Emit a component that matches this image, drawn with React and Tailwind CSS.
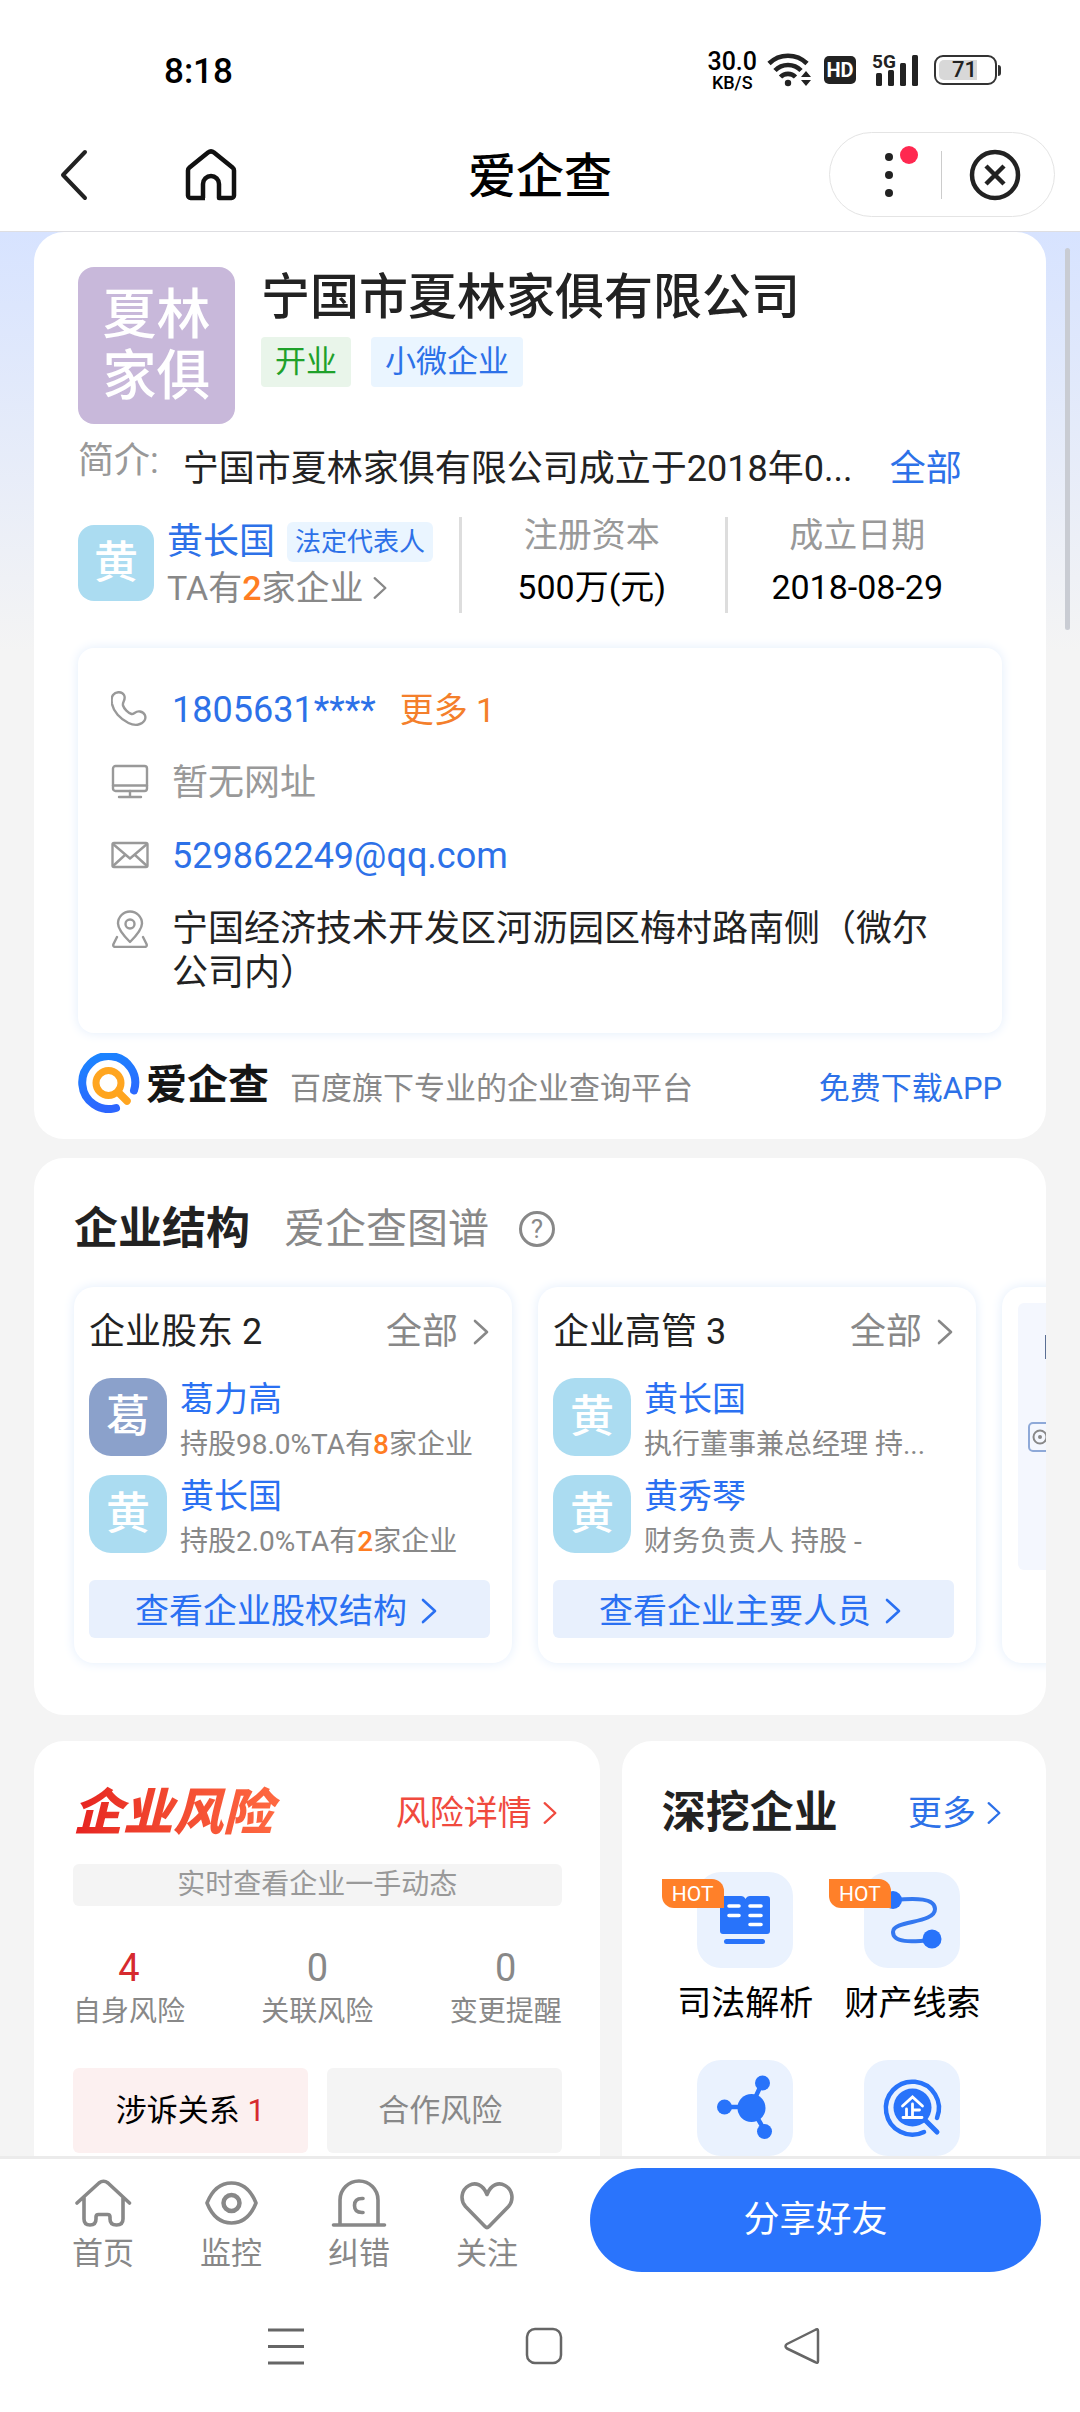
const people = {
  holders: [
    { surname: '葛', name: '葛力高', color: 'bg-[#8ba1cb]', before: '持股98.0%TA有', count: '8', after: '家企业' },
    { surname: '黄', name: '黄长国', color: 'bg-[#abdcf1]', before: '持股2.0%TA有', count: '2', after: '家企业' },
  ],
  managers: [
    { surname: '黄', name: '黄长国', color: 'bg-[#abdcf1]', before: '执行董事兼总经理 持...' },
    { surname: '黄', name: '黄秀琴', color: 'bg-[#abdcf1]', before: '财务负责人 持股 -' },
  ],
};

const Chevron = ({ className = '' }) => (
  <svg viewBox="0 0 18 26" className={className} fill="none" stroke="currentColor" strokeWidth="2.6" strokeLinecap="round" strokeLinejoin="round">
    <path d="M3 2l12 11L3 24" />
  </svg>
);

const StatusBar = () => (
  <div className="flex h-[104px] shrink-0 items-end justify-between pr-[79px] pl-[164px] text-[#222]">
    <div className="mb-[9px] text-[35px] leading-[46px] font-medium text-black">8:18</div>
    <div className="mb-[11px] flex h-[46px] items-center">
      <div className="flex flex-col items-center font-medium text-black">
        <span className="text-[25px] leading-[25px]">30.0</span>
        <span className="text-[18px] leading-[18px]">KB/S</span>
      </div>
      <svg viewBox="0 0 46 36" className="ml-[10px] h-9 w-[46px]" fill="none" stroke="currentColor" strokeWidth="4.6">
        <path d="M2 11.500a27 27 0 0 1 38 0" />
        <path d="M8 18.500a18 18 0 0 1 26 0" />
        <path d="M13.500 25a10.500 10.500 0 0 1 15 0" />
        <circle cx="21" cy="31" r="3.200" fill="currentColor" stroke="none" />
        <path d="M34 25l5-6 5 6zM34 28l5 6 5-6z" fill="currentColor" stroke="none" />
      </svg>
      <div className="ml-[11px] flex h-7 w-8 items-center justify-center rounded-[5px] bg-[#222] text-[20px] leading-none font-bold text-white">HD</div>
      <svg viewBox="0 0 48 36" className="ml-4 h-9 w-[48px] overflow-visible" fill="currentColor">
        <text x="0" y="16" fontSize="19" fontWeight="700" fontFamily="Roboto, sans-serif">5G</text>
        <rect x="4" y="21" width="6" height="13" rx="1.500" />
        <rect x="16" y="18" width="6" height="16" rx="1.500" />
        <rect x="28" y="11" width="6" height="23" rx="1.500" />
        <rect x="40" y="3" width="6" height="31" rx="1.500" />
      </svg>
      <div className="ml-[14px] flex h-[30px] w-[63px] rounded-[9px] border-2 border-[#333] p-[3px]">
        <div className="flex w-[38px] items-center justify-end rounded-l-[5px] bg-[#d8d8d8] text-[22px] leading-none font-medium">71</div>
      </div>
      <div className="ml-px h-[11px] w-[3px] rounded-r bg-[#333]" />
    </div>
  </div>
);

const Header = () => (
  <header className="grid h-[128px] shrink-0 grid-cols-[1fr_auto_1fr] items-center border-b border-[#dedee2] pt-7 pb-[14px]">
    <div className="flex items-center pl-[58px]">
      <button aria-label="返回">
        <svg viewBox="0 0 32 52" className="h-[52px] w-8" fill="none" stroke="#222" strokeWidth="4" strokeLinecap="round" strokeLinejoin="round">
          <path d="M27 3L5 26l22 23" />
        </svg>
      </button>
      <button aria-label="主页" className="ml-[95px]">
        <svg viewBox="0 0 52 52" className="h-[52px] w-[52px]" fill="none" stroke="#111" strokeWidth="4.500" strokeLinejoin="round">
          <path d="M20 49H5.500a2.500 2.500 0 0 1-2.500-2.500V21.500a4 4 0 0 1 1.500-3L23 3.500a5 5 0 0 1 6 0l18.500 15a4 4 0 0 1 1.500 3V46.500a2.500 2.500 0 0 1-2.500 2.500H34V35a8 8 0 0 0-16 0v14" />
        </svg>
      </button>
    </div>
    <h1 className="pt-1 text-[48px] leading-[60px] font-medium text-black">爱企查</h1>
    <div className="mr-[25px] flex h-[85px] w-[226px] items-center justify-self-end rounded-full border border-[#e4e4e4]">
      <button aria-label="更多选项" className="relative flex h-full w-[111px] flex-col items-center justify-center gap-[10px] pl-[6px]">
        <i className="h-2 w-2 rounded-full bg-[#222]" />
        <i className="h-2 w-2 rounded-full bg-[#222]" />
        <i className="h-2 w-2 rounded-full bg-[#222]" />
        <i className="absolute top-[13px] right-[23px] h-[18px] w-[18px] rounded-full bg-[#ff2850]" />
      </button>
      <span className="h-12 w-px bg-[#ccc]" />
      <button aria-label="关闭" className="flex flex-1 justify-center pr-[6px]">
        <svg viewBox="0 0 52 52" className="h-[52px] w-[52px]" fill="none" stroke="#222" strokeWidth="4.500">
          <circle cx="26" cy="26" r="23" />
          <path d="M17 17l18 18M35 17L17 35" />
        </svg>
      </button>
    </div>
  </header>
);

const contactIcon = 'h-[38px] w-[38px] shrink-0 mt-[3px] mr-[23px]';

const ContactBox = () => (
  <address className="mt-[39px] flex flex-col gap-[29px] rounded-2xl pt-[40px] pr-12 pb-[38px] pl-[33px] text-[36px] leading-[44px] text-[#222] not-italic shadow-[0_0_12px_#e2edfb]">
    <div className="flex">
      <svg viewBox="0 0 38 38" className={contactIcon} fill="none" stroke="#999" strokeWidth="2.400" strokeLinejoin="round">
        <path d="M2 4C5 0 11 .500 13 4c2.500 4.500-2 7-1 10.500 1.200 3.500 5 7.500 8.500 8.500 2.500 .700 4-3.500 8.500-2.500 5 1 6.500 5.500 4.500 9-3 5-10 5.500-16 2.500C9 28 2.500 20.500 1 13 .300 9 .500 6 2 4z" />
      </svg>
      <a href="#phone" className="text-[#2d71e8]">1805631****</a>
      <button className="ml-[24px] text-[34px] text-[#f47f2b]">更多 1</button>
    </div>
    <div className="flex text-[#999]">
      <svg viewBox="0 0 38 38" className={contactIcon} fill="none" stroke="#999" strokeWidth="2.400" strokeLinecap="round">
        <rect x="2" y="2" width="34" height="25" rx="2.500" />
        <path d="M2 21.500h34M19 27v6M8 33h22" />
      </svg>
      暂无网址
    </div>
    <div className="flex">
      <svg viewBox="0 0 38 38" className={contactIcon} fill="none" stroke="#999" strokeWidth="2.400" strokeLinejoin="round">
        <rect x="1.500" y="6" width="35" height="24" rx="1.500" />
        <path d="M2 7l17 14.500L36 7M2 29l12-11M36 29L24 18" />
      </svg>
      <a href="#mail" className="text-[#2d71e8]">529862249@qq.com</a>
    </div>
    <div className="flex">
      <svg viewBox="0 0 38 38" className={contactIcon} fill="none" stroke="#999" strokeWidth="2.400" strokeLinecap="round" strokeLinejoin="round">
        <path d="M19 32C12 25 7 19 7 13.500a12 12 0 0 1 24 0C31 19 26 25 19 32z" />
        <circle cx="19" cy="14" r="4.500" />
        <path d="M6 27l-3.500 7c-.700 1.700 0 3 2 3h29c2 0 2.700-1.300 2-3L32 27" />
      </svg>
      <span>宁国经济技术开发区河沥园区梅村路南侧（微尔公司内）</span>
    </div>
  </address>
);

const CompanyCard = () => (
  <section className="rounded-[30px] bg-white px-[44px] pt-[35px] pb-[26px]">
    <div className="flex">
      <div className="flex h-[157px] w-[157px] items-center justify-center rounded-2xl bg-[#c8b8da] text-center text-[54px] leading-[61px] font-medium text-white">
        夏林
        <br />
        家俱
      </div>
      <div className="ml-[26px]">
        <h2 className="pt-[2px] text-[49px] leading-[58px] font-medium text-[#222]">宁国市夏林家俱有限公司</h2>
        <div className="mt-[10px] flex gap-5 text-[31px] leading-[50px]">
          <span className="rounded bg-[#e9f5ea] px-[14px] text-[#1fa12b]">开业</span>
          <span className="rounded bg-[#eaf5ff] px-[14px] text-[#2d71e8]">小微企业</span>
        </div>
      </div>
    </div>

    <div className="mt-[15px] flex text-[36px] leading-[60px]">
      <span className="leading-[44px] text-[#999]">简介:</span>
      <p className="ml-[24px] w-[674px] text-[#222]">宁国市夏林家俱有限公司成立于2018年0...</p>
      <button className="ml-[33px] text-[#2d71e8]">全部</button>
    </div>

    <div className="mt-[18px] flex h-[92px] items-center">
      <div className="flex h-[76px] w-[76px] items-center justify-center rounded-2xl bg-[#abdcf1] text-[44px] font-medium text-white">黄</div>
      <div className="ml-[13px] w-[292px] pt-[2px]">
        <div className="flex items-center">
          <a href="#person" className="text-[36px] leading-[48px] text-[#2d71e8]">黄长国</a>
          <span className="ml-[12px] rounded-md bg-[#eaf5ff] px-2 text-[26px] leading-10 text-[#2d71e8]">法定代表人</span>
        </div>
        <button className="flex items-center text-[34px] leading-[44px] text-[#888]">
          <span>TA有<b className="font-medium text-[#ff7d22]">2</b>家企业</span>
          <Chevron className="ml-[9px] h-6 w-4" />
        </button>
      </div>
      <dl className="grid h-full flex-1 grid-cols-2 pr-3 text-center text-[34px]">
        <div className="border-l-[3px] border-[#ddd] pr-[3px]">
          <dt className="leading-[36px] text-[#999]">注册资本</dt>
          <dd className="mt-2 leading-[52px] text-black">500万(元)</dd>
        </div>
        <div className="border-l-[3px] border-[#ddd] pr-[3px]">
          <dt className="leading-[36px] text-[#999]">成立日期</dt>
          <dd className="mt-2 leading-[52px] text-black">2018-08-29</dd>
        </div>
      </dl>
    </div>

    <ContactBox />

    <div className="mt-5 flex h-[60px] items-end text-[31px] leading-[48px]">
      <svg viewBox="0 0 62 60" className="h-[60px] w-[62px]" fill="none" strokeLinecap="round">
        <defs>
          <linearGradient id="ring" x1="0" y1="0" x2="0.300" y2="1">
            <stop offset="0" stopColor="#1a86ff" />
            <stop offset="1" stopColor="#2c66ff" />
          </linearGradient>
        </defs>
        <path d="M56 37.500A26.500 26.500 0 1 0 38 55" stroke="url(#ring)" strokeWidth="8" />
        <circle cx="30.500" cy="30" r="12.500" stroke="#ffa51f" strokeWidth="7" />
        <path d="M40 39l9 9" stroke="#ffa51f" strokeWidth="7.500" />
      </svg>
      <strong className="ml-[6px] text-[41px] leading-[56px] font-bold text-[#151515]">爱企查</strong>
      <span className="ml-[21px] flex-1 text-[#888]">百度旗下专业的企业查询平台</span>
      <a href="#app" className="text-[#2d71e8]">免费下载APP</a>
    </div>
  </section>
);

const PeopleCard = ({ title, list, action }) => (
  <div className="w-[438px] shrink-0 rounded-[20px] pt-[20px] pr-[22px] pb-[25px] pl-[15px] shadow-[0_0_12px_#e2edfb]">
    <div className="flex justify-between text-[36px] leading-[50px]">
      <h3 className="text-[#222]">{title}</h3>
      <button className="flex items-center text-[#888]">
        全部
        <Chevron className="ml-[14px] h-7 w-[18px]" />
      </button>
    </div>
    <ul className="mt-[21px] flex flex-col gap-[5px]">
      {list.map((p) => (
        <li key={p.name} className="flex">
          <div className={`flex h-[78px] w-[78px] shrink-0 items-center justify-center rounded-[22px] text-[44px] font-medium text-white ${p.color}`}>{p.surname}</div>
          <div className="ml-[13px]">
            <a href="#person" className="block text-[34px] leading-[42px] text-[#2a70f2]">{p.name}</a>
            <p className="text-[28px] leading-[50px] whitespace-nowrap text-[#888]">
              {p.before}
              {p.count && <b className="font-medium text-[#ff7d22]">{p.count}</b>}
              {p.after}
            </p>
          </div>
        </li>
      ))}
    </ul>
    <button className="mt-[13px] flex h-[58px] w-full items-center justify-center rounded-md bg-[#e8f0fd] pt-[3px] pr-[6px] text-[34px] leading-[54px] text-[#2a70f2]">
      {action}
      <Chevron className="ml-[13px] h-7 w-[18px]" />
    </button>
  </div>
);

const StructureCard = () => (
  <section className="mt-[19px] overflow-hidden rounded-[30px] bg-white pt-[41px] pb-[52px] pl-10">
    <div className="flex items-center leading-[60px]">
      <h2 className="text-[44px] font-bold text-[#222]">企业结构</h2>
      <span className="ml-[34px] text-[41px] text-[#888]">爱企查图谱</span>
      <button aria-label="说明" className="ml-[30px] flex h-9 w-9 items-center justify-center rounded-full border-[3px] border-[#888] text-[26px] leading-none text-[#888]">?</button>
    </div>
    <div className="mt-[28px] flex gap-[26px]">
      <PeopleCard title="企业股东 2" list={people.holders} action="查看企业股权结构" />
      <PeopleCard title="企业高管 3" list={people.managers} action="查看企业主要人员" />
      {/* next card only peeks in from the right edge */}
      <div className="w-[438px] shrink-0 rounded-[20px] p-4 shadow-[0_0_12px_#e2edfb]">
        <div className="h-[267px] rounded-md bg-[#f4f7fe] pt-8 pl-[10px]">
          <div className="ml-[17px] h-[24px] w-[60px] bg-[#5a6f94]" />
          <svg viewBox="0 0 60 30" className="mt-[63px] h-[30px] w-[60px]" fill="none" stroke="#8ea9d8" strokeWidth="2">
            <rect x="1" y="1" width="58" height="28" rx="4" />
            <circle cx="12" cy="15" r="6.500" stroke="#888" />
            <circle cx="12" cy="15" r="2" fill="#888" stroke="none" />
          </svg>
        </div>
      </div>
    </div>
  </section>
);

const riskStats = [
  { value: 4, label: '自身风险', color: 'text-[#d62a2f]' },
  { value: 0, label: '关联风险', color: 'text-[#888]' },
  { value: 0, label: '变更提醒', color: 'text-[#888]' },
];

const RiskCard = () => (
  <section className="rounded-t-[30px] bg-white pt-[42px] pr-[38px] pl-[39px]">
    <div className="flex items-center justify-between leading-[60px]">
      <h2 className="bg-gradient-to-r from-[#e62020] to-[#ff6a42] bg-clip-text pr-2 text-[50px] font-black text-transparent italic">企业风险</h2>
      <a href="#risk" className="flex items-center text-[34px] text-[#f04a3e]">
        风险详情
        <Chevron className="mr-1 ml-[10px] h-[26px] w-4" />
      </a>
    </div>
    <p className="mt-[21px] h-[42px] rounded-md bg-[#f4f4f4] text-center text-[28px] leading-[42px] text-[#999]">实时查看企业一手动态</p>
    <dl className="mt-[40px] flex justify-between text-center leading-[44px]">
      {riskStats.map((s) => (
        <div key={s.label} className="flex flex-col-reverse">
          <dt className="text-[28px] text-[#888]">{s.label}</dt>
          <dd className={`text-[38px] ${s.color}`}>{s.value}</dd>
        </div>
      ))}
    </dl>
    <div className="mt-[34px] grid grid-cols-2 gap-[19px] text-[31px] leading-[85px]">
      <button className="rounded-md bg-[#fcf0f0] text-black">
        涉诉关系 <span className="text-[#d62a2f]">1</span>
      </button>
      <button className="rounded-md bg-[#f4f4f4] pr-2 text-[#888]">合作风险</button>
    </div>
  </section>
);

const tools = [
  {
    id: 'law',
    label: '司法解析',
    hot: true,
    icon: (
      <g fill="#2873fa">
        <path d="M27 24h17q3 0 4.500 3Q50 24 53 24h17a3 3 0 0 1 3 3v32a3 3 0 0 1-3 3H26a3 3 0 0 1-3-3V27a3 3 0 0 1 4-3z" />
        <rect x="27" y="67" width="41" height="5" rx="2.500" />
        <path d="M32 34h10M32 43.500h10M53 34h11M53 43.500h11M53 52.500h11" stroke="#fff" strokeWidth="3.600" strokeLinecap="round" />
      </g>
    ),
  },
  {
    id: 'assets',
    label: '财产线索',
    hot: true,
    icon: (
      <g fill="#2873fa">
        <path d="M30 28c22-2 41-2 41 9 0 15-42 11-42 23 0 11 18 10 39 8" fill="none" stroke="#3478f0" strokeWidth="4" />
        <circle cx="29" cy="28" r="9" />
        <circle cx="68" cy="67" r="9.500" />
      </g>
    ),
  },
  {
    id: 'graph',
    icon: (
      <g fill="#2873fa" stroke="#2873fa" strokeWidth="4.500">
        <path d="M28 47h26M54 47l11-24M54 47l14 24" />
        <g stroke="none">
          <circle cx="54.500" cy="48" r="14" />
          <circle cx="27.500" cy="47" r="7.500" />
          <circle cx="65.500" cy="23" r="7.500" />
          <circle cx="67.500" cy="71.500" r="7.500" />
        </g>
      </g>
    ),
  },
  {
    id: 'search',
    icon: (
      <g fill="none" stroke="#2873fa" strokeWidth="4.500" strokeLinecap="round">
        <path d="M73 58A26.500 26.500 0 1 0 60 72" />
        <circle cx="48.500" cy="47.500" r="19" fill="#2873fa" stroke="none" />
        <path d="M60 59l13 13" strokeWidth="5" />
        <path d="M38.500 46l10-9 10 9M48.500 44v13M48.500 50h7M42.500 49v8M39 57.500h19" stroke="#fff" strokeWidth="2.800" />
      </g>
    ),
  },
];

const ToolsCard = () => (
  <section className="rounded-t-[30px] bg-white pt-[42px] pr-[44px] pl-10">
    <div className="flex items-center justify-between leading-[60px]">
      <h2 className="text-[44px] font-bold text-[#222]">深挖企业</h2>
      <a href="#tools" className="flex items-center text-[34px] text-[#2d71e8]">
        更多
        <Chevron className="ml-[10px] h-[26px] w-4" />
      </a>
    </div>
    <div className="mt-[29px] grid grid-cols-2 gap-y-8 pr-[6px]">
      {tools.map((t) => (
        <button key={t.id} aria-label={t.label || t.id} className="relative flex flex-col items-center">
          <svg viewBox="0 0 96 96" className="h-24 w-24 rounded-3xl bg-[#eaf2fe]">{t.icon}</svg>
          {t.hot && (
            <span className="absolute top-[7px] left-0 h-[29px] w-[62px] rounded-tr-xl rounded-bl-xl bg-[#ff8029] text-[21px] leading-[30px] text-white">HOT</span>
          )}
          {t.label && <span className="mt-[10px] text-[34px] leading-[50px] whitespace-nowrap text-black">{t.label}</span>}
        </button>
      ))}
    </div>
  </section>
);

const tabs = [
  {
    label: '首页',
    icon: <path d="M2 25L24 5q4.500-3.500 9 0l21.500 20M9 19v22q0 6 6 6t6-6v-2q0-2.500 2.500-2.500h9q2.500 0 2.500 2.500v2q0 6 6.500 6t6.500-6V19" />,
  },
  {
    label: '监控',
    icon: (
      <>
        <path d="M4 25Q12 5 28.500 5T53 25q-8 20-24.500 20T4 25z" />
        <circle cx="28.500" cy="25" r="8" strokeWidth="4.500" />
      </>
    ),
  },
  {
    label: '纠错',
    icon: (
      <>
        <path d="M9 46V22a19 19 0 0 1 38 0v24M2.500 47h51" />
        <path d="M32 20.500h-1q-7.500 0-7.500 7t7.500 7h1" />
      </>
    ),
  },
  {
    label: '关注',
    icon: <path d="M28 16.500C24 6 16 4 10 7.500 2 12 1 22 6.500 28.500L26 48.500q2 2 4 0L49.500 28.500C55 22 54 12 46 7.500 40 4 32 6 28 16.500z" />,
  },
];

const BottomBar = () => (
  <footer className="shrink-0 border-t-[3px] border-[#ebebeb] bg-white">
    <div className="flex h-[113px] items-end pr-[39px] pl-[39px]">
      <nav className="flex">
        {tabs.map((t) => (
          <button key={t.label} className="flex h-[104px] w-[128px] flex-col items-center pt-[10px] text-[31px] leading-[36px] text-[#888]">
            <svg viewBox="0 0 57 52" className="mb-[6px] h-[52px] w-[57px]" fill="none" stroke="#888" strokeWidth="3.600" strokeLinecap="round" strokeLinejoin="round">
              {t.icon}
            </svg>
            {t.label}
          </button>
        ))}
      </nav>
      <button className="ml-[39px] h-[104px] flex-1 rounded-full bg-[#2a74fc] text-[36px] text-white">分享好友</button>
    </div>
    <div className="flex h-[140px] items-center justify-around pt-2 pr-[149px] pl-[157px] text-[#666]">
      <svg viewBox="0 0 38 38" className="h-[38px] w-[38px]" fill="none" stroke="currentColor" strokeWidth="3">
        <path d="M1 3h36M1 19.500h36M1 36h36" />
      </svg>
      <svg viewBox="0 0 38 38" className="h-[38px] w-[38px]" fill="none" stroke="currentColor" strokeWidth="2.500">
        <rect x="2" y="2" width="34" height="34" rx="8" />
      </svg>
      <svg viewBox="0 0 38 38" className="h-[38px] w-[38px]" fill="none" stroke="currentColor" strokeWidth="2.500" strokeLinejoin="round">
        <path d="M32 3Q35 1 35 4v30q0 3-3 1L4 21.500Q1 19 4 17z" />
      </svg>
    </div>
  </footer>
);

const App = () => {
  return (
    <div className="flex h-screen flex-col overflow-hidden bg-white font-['Roboto','Noto_Sans_CJK_SC',sans-serif]" lang="zh-CN">
      <StatusBar />
      <Header />
      <main className="relative min-h-0 flex-1 overflow-hidden bg-[#f4f4f4] bg-[linear-gradient(#d7e3ff,#f4f4f4_420px)] px-[34px]">
        <CompanyCard />
        <StructureCard />
        <div className="mt-[26px] grid grid-cols-[4fr_3fr] gap-[22px]">
          <RiskCard />
          <ToolsCard />
        </div>
        {/* scroll thumb */}
        <div className="absolute top-4 right-[10px] h-[382px] w-[5px] rounded-full bg-[#c9ccd3]" />
      </main>
      <BottomBar />
    </div>
  );
};

export default App;
